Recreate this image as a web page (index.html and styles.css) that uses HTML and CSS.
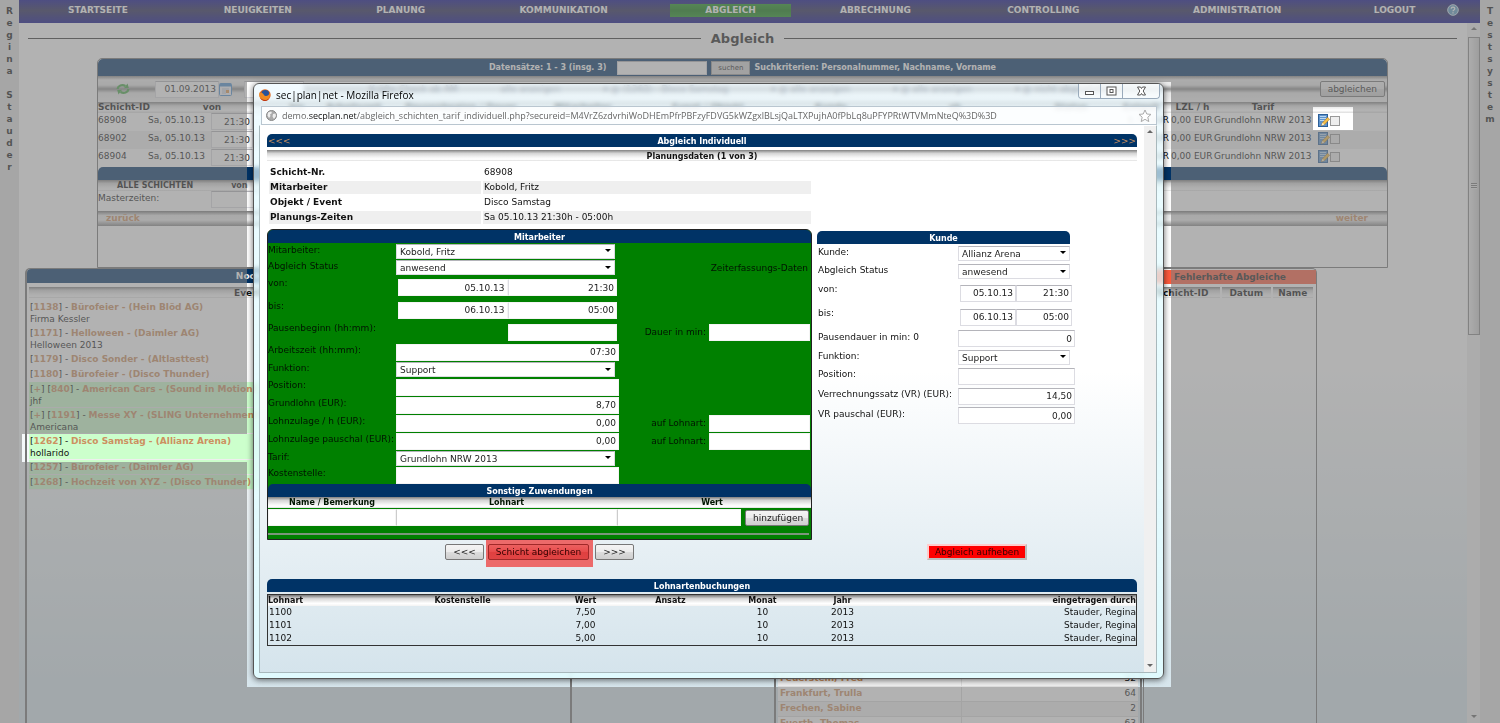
FILE: index.html
```html
<!DOCTYPE html>
<html lang="de">
<head>
<meta charset="utf-8">
<title>sec|plan|net - Abgleich</title>
<link rel="stylesheet" href="styles.css">
</head>
<body>
<svg class="defs" aria-hidden="true">
  <symbol id="edit" viewBox="0 0 12 13">
    <rect x="0.5" y="0.5" width="9" height="12" fill="#5e93cc" stroke="#2c5f98"/>
    <path d="M2 2.5h6M2 4.5h6M2 6.5h5" stroke="#b9d6f0"/>
    <path d="M3.5 11.5 4.5 8.8 9.6 3.4 11.6 5.2 6.4 10.5z" fill="#f5c04a" stroke="#b97a1c" stroke-width=".6"/>
    <path d="M3.5 11.5 4.5 8.8 6.4 10.5z" fill="#fff3d0"/>
  </symbol>
</svg>
<div class="app">
  <aside class="rail">R
e
g
i
n
a

S
t
a
u
d
e
r</aside>
  <div class="center">
    <nav class="nav">
      <a href="#">STARTSEITE</a><a href="#">NEUIGKEITEN</a><a href="#">PLANUNG</a><a href="#">KOMMUNIKATION</a><a href="#" class="active">ABGLEICH</a><a href="#">ABRECHNUNG</a><a href="#">CONTROLLING</a><a href="#">ADMINISTRATION</a><a href="#">LOGOUT</a>
      <a href="#" class="help" aria-label="Hilfe"><svg width="12" height="12" viewBox="0 0 12 12"><circle cx="6" cy="6" r="5.3" fill="#5b9bc4" stroke="#cfe4f2"/><path d="M4.2 4.8c0-2.4 3.6-2.2 3.6-.2 0 1.3-1.8 1.3-1.8 2.6M6 8.2v1.2" fill="none" stroke="#fff" stroke-width="1.2"/></svg></a>
    </nav>
    <div class="view">
      <main class="content">
        <div class="title"><h1>Abgleich</h1></div>
        <section class="panel shifts">
          <form class="bar search">
            <label for="q">Datensätze: 1 - 3 (insg. 3)</label>
            <input id="q" type="text"><button type="button">suchen</button>
            <span>Suchkriterien: Personalnummer, Nachname, Vorname</span>
          </form>
          <div class="filters">
            <svg class="refresh" width="14" height="12" viewBox="0 0 14 12"><path d="M1.5 6C2 2.5 6 1 9.5 3M12.500 6C12 9.500 8 11 4.500 9" fill="none" stroke="#46a846" stroke-width="2.200"/><path d="M8 5.300 12.800 5 11.500.4zM6 6.700 1.200 7 2.500 11.600z" fill="#46a846"/></svg>
            <input class="date" type="text" value="01.09.2013" aria-label="Datum ab">
            <svg class="cal" width="13" height="13" viewBox="0 0 13 13"><rect x=".5" y=".5" width="12" height="12" rx="1" fill="#f4f6fa" stroke="#4d8fd0"/><path d="M1 2h11" stroke="#4d8fd0" stroke-width="3"/><path d="M3 6h7M3 8h7M3 10h4" stroke="#b8c4d4"/><rect x="7" y="7" width="3" height="3" fill="#e09a50"/></svg>
            <input class="date two" type="text" aria-label="Datum bis">
            <div class="choices"><span>Kräfte Check ab AM</span><span>alle anzeigen</span><span>▾ @ (1262) - Disco Samstag</span><span>▾ @ alle anzeigen</span><span>▾ @ alle anzeigen</span><span>▾ @ nicht abgeglichen</span></div>
            <button type="button" class="btn">abgleichen</button>
          </div>
          <table class="grid">
            <colgroup><col class="c50"><col class="c60"><col class="c68"><col class="c42"><col class="c72"><col class="c142"><col class="c102"><col class="c148"><col class="c98"><col class="c150"><col class="c82"><col class="c59"><col class="c43"><col class="c98"><col></colgroup>
            <thead><tr><th class="l">Schicht-ID</th><th colspan="2">von</th><th>bis</th><th>Arbeitszeit</th><th>Pausenbeginn / Dauer</th><th>Mitarbeiter</th><th>Event / Objekt</th><th>Kunde</th><th>ab</th><th>Status</th><th>Entgelt</th><th>LZL / h</th><th>Tarif</th><th></th></tr></thead>
            <tbody>
              <tr><td>68908</td><td>Sa, 05.10.13</td><td><input type="text" value="21:30" aria-label="von 68908"></td><td colspan="8"></td><td class="r">8,70 EUR</td><td>0,00 EUR</td><td>Grundlohn NRW 2013</td><td class="act"><svg width="12" height="13"><use href="#edit"/></svg><input type="checkbox" aria-label="68908"></td></tr>
              <tr><td>68902</td><td>Sa, 05.10.13</td><td><input type="text" value="21:30" aria-label="von 68902"></td><td colspan="8"></td><td class="r">8,70 EUR</td><td>0,00 EUR</td><td>Grundlohn NRW 2013</td><td class="act"><svg width="12" height="13"><use href="#edit"/></svg><input type="checkbox" aria-label="68902"></td></tr>
              <tr><td>68904</td><td>Sa, 05.10.13</td><td><input type="text" value="21:30" aria-label="von 68904"></td><td colspan="8"></td><td class="r">8,70 EUR</td><td>0,00 EUR</td><td>Grundlohn NRW 2013</td><td class="act"><svg width="12" height="13"><use href="#edit"/></svg><input type="checkbox" aria-label="68904"></td></tr>
            </tbody>
          </table>
          <div class="bar thin"></div>
          <div class="metal all"><b>ALLE SCHICHTEN</b><b>von</b></div>
          <div class="master"><label for="mz">Masterzeiten:</label><input id="mz" type="text"></div>
          <div class="pager"><a href="#">zurück</a><a href="#">weiter</a></div>
        </section>
        <div class="lower">
          <section class="panel events">
            <h2 class="bar">Noch nicht abgeglichene</h2>
            <div class="metal">Event / Objekt - (Kunden)</div>
            <ul>
              <li>[<a href="#">1138</a>] - <a href="#">Bürofeier - (Hein Blöd AG)</a><br>Firma Kessler</li>
              <li>[<a href="#">1171</a>] - <a href="#">Helloween - (Daimler AG)</a><br>Helloween 2013</li>
              <li>[<a href="#">1179</a>] - <a href="#">Disco Sonder - (Altlasttest)</a></li>
              <li>[<a href="#">1180</a>] - <a href="#">Bürofeier - (Disco Thunder)</a></li>
              <li class="ok">[<a href="#">+</a>] [<a href="#">840</a>] - <a href="#">American Cars - (Sound in Motion)</a><br>jhf</li>
              <li class="ok">[<a href="#">+</a>] [<a href="#">1191</a>] - <a href="#">Messe XY - (SLING Unternehmen)</a><br>Americana</li>
              <li class="ok">[<a href="#">1262</a>] - <a href="#">Disco Samstag - (Allianz Arena)</a><br>hollarido</li>
              <li class="ok">[<a href="#">1257</a>] - <a href="#">Bürofeier - (Daimler AG)</a></li>
              <li class="ok">[<a href="#">1268</a>] - <a href="#">Hochzeit von XYZ - (Disco Thunder)</a></li>
            </ul>
          </section>
          <section class="panel staff">
            <table>
              <tr><td><a href="#">Feuerstein, Fred</a></td><td>32</td></tr>
              <tr><td><a href="#">Frankfurt, Trulla</a></td><td>64</td></tr>
              <tr><td><a href="#">Frechen, Sabine</a></td><td>2</td></tr>
              <tr><td><a href="#">Fuerth, Thomas</a></td><td>63</td></tr>
            </table>
          </section>
          <section class="panel faults">
            <h2 class="bar red">Fehlerhafte Abgleiche</h2>
            <div class="heads"><b class="metal">Schicht-ID</b><b class="metal">Datum</b><b class="metal">Name</b></div>
          </section>
        </div>
      </main>
      <div class="scroll"><i class="up"></i><div class="thumb"><i></i></div><i class="down"></i></div>
    </div>
  </div>
  <aside class="rail right">T
e
s
t
s
y
s
t
e
m</aside>
</div>

<div class="window" role="dialog" aria-label="Abgleich Individuell">
  <header class="titlebar">
    <svg width="12" height="12" viewBox="0 0 12 12"><circle cx="6" cy="6" r="5.700" fill="#e0661c"/><circle cx="6.300" cy="5" r="3.900" fill="#27539a"/><path d="M.5 3.500C1.500 4 2 3.500 3.500 4.200 5 5 4.500 6.500 6.500 7c2 .3 3.500-1 4-3 1 3.500-.8 7.500-4.500 7.700C2 11.700-.5 8 .5 3.500z" fill="#ef8a22"/><path d="M1 8.500c2 3 7 3.500 9.500.5-1.500 4-8 4-9.500-.5z" fill="#b92f12"/></svg>
    <span>sec|plan|net - Mozilla Firefox</span>
    <div class="wbtns">
      <button type="button" aria-label="Minimieren"><svg width="11" height="10" viewBox="0 0 11 10"><rect x="1.500" y="5.500" width="8" height="3" fill="#fff" stroke="#555"/></svg></button>
      <button type="button" aria-label="Maximieren"><svg width="11" height="10" viewBox="0 0 11 10"><rect x="1" y="1" width="9" height="8" fill="#fff" stroke="#555"/><rect x="4" y="3.500" width="3" height="3" fill="#fff" stroke="#555"/></svg></button>
      <button type="button" class="wide" aria-label="Schließen"><svg width="11" height="10" viewBox="0 0 11 10"><path d="M1.500 1h3l1 1.500 1-1.500h3L7.200 5l2.300 4h-3l-1-1.500L4.500 9h-3l2.300-4z" fill="#fff" stroke="#555"/></svg></button>
    </div>
  </header>
  <div class="url">
    <svg width="11" height="11" viewBox="0 0 11 11"><circle cx="5.500" cy="5.500" r="5" fill="#aaa" stroke="#888"/><path d="M2 2.500 5 1.500 6 3 4 4.500 4.500 6 3 8 1.500 5.500zM7 4l2.500-.5.500 2.500L8 9 6.500 6.500z" fill="#eee"/></svg>
    <span>demo.<b>secplan.net</b>/abgleich_schichten_tarif_individuell.php?secureid=M4VrZ6zdvrhiWoDHEmPfrPBFzyFDVG5kWZgxlBLsjQaLTXPujhA0fPbLq8uPFYPRtWTVMmNteQ%3D%3D</span>
    <svg class="star" width="14" height="14" viewBox="0 0 14 14"><path d="M7 1 8.800 5 13 5.400 9.800 8.200 10.800 12.600 7 10.300 3.200 12.600 4.200 8.200 1 5.400 5.200 5z" fill="#fff" stroke="#aaa"/></svg>
  </div>
  <div class="frame">
    <div class="page">
      <div class="bar head"><a href="#">&lt;&lt;&lt;</a><h2>Abgleich Individuell</h2><a href="#">&gt;&gt;&gt;</a></div>
      <div class="metal sub">Planungsdaten (1 von 3)</div>
      <table class="info">
        <tr><th>Schicht-Nr.</th><td>68908</td></tr>
        <tr><th>Mitarbeiter</th><td>Kobold, Fritz</td></tr>
        <tr><th>Objekt / Event</th><td>Disco Samstag</td></tr>
        <tr><th>Planungs-Zeiten</th><td>Sa 05.10.13 21:30h - 05:00h</td></tr>
      </table>
      <div class="forms">
        <form class="worker">
          <h3 class="bar">Mitarbeiter</h3>
          <div class="row r16"><label for="m1">Mitarbeiter:</label><select id="m1"><option>Kobold, Fritz</option></select></div>
          <div class="row"><label for="m2">Abgleich Status</label><select id="m2"><option>anwesend</option></select><span class="zd">Zeiterfassungs-Daten</span></div>
          <div class="row r23"><label for="m3">von:</label><div class="pair"><input id="m3" type="text" value="05.10.13"><input type="text" value="21:30" aria-label="von Uhrzeit"></div></div>
          <div class="row r22"><label for="m4">bis:</label><div class="pair"><input id="m4" type="text" value="06.10.13"><input type="text" value="05:00" aria-label="bis Uhrzeit"></div></div>
          <div class="row r22"><label for="m5">Pausenbeginn (hh:mm):</label><div class="pair"><span></span><input id="m5" type="text"></div><label class="side" for="m5b">Dauer in min:</label><input id="m5b" type="text"></div>
          <div class="row r18"><label for="m6">Arbeitszeit (hh:mm):</label><input id="m6" type="text" value="07:30"></div>
          <div class="row"><label for="m7">Funktion:</label><select id="m7"><option>Support</option></select></div>
          <div class="row r18"><label for="m8">Position:</label><input id="m8" type="text"></div>
          <div class="row r18"><label for="m9">Grundlohn (EUR):</label><input id="m9" type="text" value="8,70"></div>
          <div class="row r18"><label for="m10">Lohnzulage / h (EUR):</label><input id="m10" type="text" value="0,00"><label class="side" for="m10b">auf Lohnart:</label><input id="m10b" type="text"></div>
          <div class="row r18"><label for="m11">Lohnzulage pauschal (EUR):</label><input id="m11" type="text" value="0,00"><label class="side" for="m11b">auf Lohnart:</label><input id="m11b" type="text"></div>
          <div class="row r16"><label for="m12">Tarif:</label><select id="m12"><option>Grundlohn NRW 2013</option></select></div>
          <div class="row r18"><label for="m13">Kostenstelle:</label><input id="m13" type="text"></div>
          <h3 class="bar">Sonstige Zuwendungen</h3>
          <div class="extra metal"><label for="x1">Name / Bemerkung</label><label for="x2">Lohnart</label><label for="x3">Wert</label></div>
          <div class="extra fields"><input id="x1" type="text"><input id="x2" type="text"><input id="x3" type="text"><button type="button" class="btn">hinzufügen</button></div>
          <hr>
        </form>
        <form class="client">
          <h3 class="bar">Kunde</h3>
          <div class="row r18"><label for="k1">Kunde:</label><select id="k1"><option>Allianz Arena</option></select></div>
          <div class="row r19"><label for="k2">Abgleich Status</label><select id="k2"><option>anwesend</option></select></div>
          <div class="row r24"><label for="k3">von:</label><div class="pair"><input id="k3" type="text" value="05.10.13"><input type="text" value="21:30" aria-label="von Uhrzeit"></div></div>
          <div class="row r24"><label for="k4">bis:</label><div class="pair"><input id="k4" type="text" value="06.10.13"><input type="text" value="05:00" aria-label="bis Uhrzeit"></div></div>
          <div class="row r19"><label for="k5">Pausendauer in min: 0</label><input id="k5" type="text" value="0"></div>
          <div class="row r18"><label for="k6">Funktion:</label><select id="k6"><option>Support</option></select></div>
          <div class="row r20"><label for="k7">Position:</label><input id="k7" type="text"></div>
          <div class="row r20"><label for="k8">Verrechnungssatz (VR) (EUR):</label><input id="k8" type="text" value="14,50"></div>
          <div class="row r19"><label for="k9">VR pauschal (EUR):</label><input id="k9" type="text" value="0,00"></div>
        </form>
      </div>
      <div class="actions">
        <div><button type="button" class="btn nav3">&lt;&lt;&lt;</button><span class="mark"><button type="button" class="btn">Schicht abgleichen</button></span><button type="button" class="btn nav3">&gt;&gt;&gt;</button></div>
        <div><button type="button" class="cancel">Abgleich aufheben</button></div>
      </div>
      <h3 class="bar book">Lohnartenbuchungen</h3>
      <table class="bookings">
        <colgroup><col class="c120"><col class="c150"><col class="c96"><col class="c74"><col class="c110"><col class="c50"><col></colgroup>
        <thead><tr><th>Lohnart</th><th>Kostenstelle</th><th>Wert</th><th>Ansatz</th><th>Monat</th><th>Jahr</th><th>eingetragen durch</th></tr></thead>
        <tbody>
          <tr><td>1100</td><td></td><td>7,50</td><td></td><td>10</td><td>2013</td><td>Stauder, Regina</td></tr>
          <tr><td>1101</td><td></td><td>7,00</td><td></td><td>10</td><td>2013</td><td>Stauder, Regina</td></tr>
          <tr><td>1102</td><td></td><td>5,00</td><td></td><td>10</td><td>2013</td><td>Stauder, Regina</td></tr>
        </tbody>
      </table>
    </div>
    <div class="scroll inner"><i class="up"></i><i class="down"></i></div>
  </div>
</div>
<div class="dim"></div>
</body>
</html>
```
FILE: styles.css
```css
* { box-sizing: border-box; }
body {
  margin: 0;
  height: 100vh;
  overflow: hidden;
  color: #111;
  font: 9px/14px "DejaVu Sans", Verdana, sans-serif;
}
h1, h2, h3, ul { margin: 0; padding: 0; font-size: inherit; }
ul { list-style: none; }
a { color: #cc9060; font-weight: bold; text-decoration: none; }
input, select, button { margin: 0; font: inherit; color: #222; border-radius: 0; min-width: 0; }
table { border-collapse: collapse; border-spacing: 0; }
th, td { padding: 0; }
svg { flex: none; }
.defs { position: absolute; width: 0; height: 0; }

input[type="text"] {
  height: 17px;
  padding: 0 2px;
  background: #fff;
  border: 1px solid #dcdce2;
  border-top-color: #b4b4ba;
  text-align: right;
}
select {
  height: 15px;
  padding: 0 3px;
  border: 1px solid #dcdce2;
  border-top-color: #b4b4ba;
  appearance: none;
  background: #fff url("data:image/svg+xml,%3Csvg xmlns='http://www.w3.org/2000/svg' width='6' height='4'%3E%3Cpath d='M0 0h6L3 3z'/%3E%3C/svg%3E") no-repeat right 3px center;
}
.btn {
  height: 16px;
  padding: 0 7px;
  line-height: 12px;
  background: linear-gradient(#f4f4f4, #ececec 48%, #dcdcdc 52%, #cfcfcf);
  border: 1px solid #777;
  border-radius: 2px;
}
.bar {
  background: #036;
  color: #fff;
  font-size: 8px;
  font-weight: bold;
  line-height: 15px;
  height: 13px;
  text-align: center;
  border-radius: 5px 5px 0 0;
}
.metal {
  height: 11px;
  line-height: 12px;
  text-align: center;
  font-weight: bold;
  background: linear-gradient(#808080, #d4d4d4 30%, #f4f4f4 65%, #fff 85%, #ddd);
}

/* application shell */
.app { display: flex; height: 100vh; background: linear-gradient(#fff 50%, #d7e6ed 95%); }
.rail {
  width: 19px;
  flex: none;
  padding-top: 5px;
  white-space: pre-line;
  text-align: center;
  font-weight: bold;
  line-height: 12px;
  background: #e2e2e2;
}
.rail.right { width: 20px; }
.center { flex: 1; min-width: 0; display: flex; flex-direction: column; }
.nav {
  display: grid;
  grid-template-columns: 158fr 162fr 124fr 202fr 132fr 158fr 178fr 210fr 105fr 33fr;
  align-items: center;
  height: 23px;
  padding-bottom: 3px;
  background: linear-gradient(#060688, #202050 45%, #060688);
}
.nav a { margin: 0 5px; line-height: 13px; text-align: center; color: #fff; }
.nav .active { background: linear-gradient(#189018, #0a780a 50%, #189018); }
.nav .help { margin: 0; height: 12px; text-align: left; }
.view { flex: 1; display: flex; min-height: 0; }
.content { flex: 1; min-width: 0; display: flex; flex-direction: column; overflow: hidden; }
.title { display: flex; align-items: center; gap: 10px; height: 27px; margin: 2px 10px 6px 9px; }
.title::before, .title::after { content: ""; flex: 1; height: 1px; background: #333; }
.title h1 { font-size: 13px; color: #222; line-height: 27px; }
.panel { border: 1px solid #777; border-bottom: 0; border-radius: 5px 5px 0 0; }

/* shift list */
.shifts { margin: 0 79px 0 78px; height: 210px; border-bottom: 1px solid #777; }
.search { display: flex; justify-content: center; align-items: center; height: 17px; }
.search input { width: 90px; height: 14px; margin-left: 11px; }
.search button { width: 39px; height: 14px; margin: 0 4px; padding: 0; font-size: 7px; line-height: 10px; font-weight: normal; background: #d8d8d8; border: 1px solid #999; }
.filters {
  display: flex;
  align-items: center;
  height: 26px;
  padding: 0 2px 0 18px;
  background: linear-gradient(#8a8a8a, #f0f0f0 15%, #e8e8e8 35%, #909090 50%, #e8e8e8 65%, #f4f4f4);
}
.refresh { margin-right: 25px; }
.date { width: 64px; border: 0; }
.cal { margin-right: 12px; }
.date.two { width: 60px; }
.choices { flex: 1; min-width: 0; display: flex; justify-content: space-between; padding: 0 205px 0 65px; white-space: nowrap; overflow: hidden; color: #223; }
.grid { width: 100%; table-layout: fixed; white-space: nowrap; }
.grid thead { background: linear-gradient(#858585, #e2e2e2 35%, #fff 75%, #ddd); }
.grid th { height: 11px; line-height: 11px; overflow: hidden; }
.grid th.l { overflow: visible; }
.grid td { height: 18px; line-height: 14px; vertical-align: top; }
.grid tbody tr:nth-child(even) { background: #f0f0f0; }
.grid td input[type="text"] { width: 42px; margin-left: 3px; }
.grid .r { text-align: right; padding-right: 2px; }
.act { padding-left: 6px; }
.act svg, .act input { vertical-align: top; margin-top: 1px; }
.act input { width: 10px; height: 10px; margin-top: 3px; appearance: none; background: #eee; border: 1px solid #999; }
.c42 { width: 42px; } .c43 { width: 43px; } .c50 { width: 50px; } .c59 { width: 59px; }
.c60 { width: 60px; } .c68 { width: 68px; } .c72 { width: 72px; } .c74 { width: 74px; }
.c82 { width: 82px; } .c96 { width: 96px; } .c98 { width: 98px; } .c102 { width: 102px; }
.c110 { width: 110px; } .c120 { width: 120px; } .c142 { width: 142px; } .c148 { width: 148px; } .c150 { width: 150px; }
.all { display: flex; gap: 38px; padding-left: 19px; font-size: 8px; }
.master { display: flex; height: 20px; }
.master label { width: 113px; }
.master input { width: 60px; }
.pager {
  display: flex;
  justify-content: space-between;
  height: 15px;
  padding: 0 19px 0 8px;
  background: linear-gradient(#777, #e8e8e8 30%, #eee 60%, #888);
}

/* lower panels */
.lower { flex: 1; display: flex; min-height: 0; padding: 0 150px 0 6px; }
.lower .bar { border-radius: 4px 4px 0 0; height: 14px; font-size: 9px; }
.events { width: 547px; border-width: 1px 2px 0; }
.events .metal { margin: 4px 2px 2px; }
.events li { min-height: 15px; margin: 0 2px; padding: 1px; line-height: 12px; }
.events .ok { background: #cfc; border-bottom: 1px solid #eee; padding-bottom: 0; }
.staff { width: 368px; margin-left: auto; padding: 402px 2px 0; border-width: 1px 2px 0; }
.staff table { width: 100%; }
.staff tr { background: #fff; border-bottom: 1px solid #ddd; }
.staff tr:nth-child(odd) { background: #f0f0f0; }
.staff td { height: 15px; padding: 0 2px; line-height: 13px; }
.staff td:last-child { width: 177px; text-align: right; border-left: 1px solid #ddd; }
.faults { width: 174px; margin-left: 1px; padding-top: 1px; }
.lower .red { background: #ff5a3c; color: #222; border-radius: 0; }
.heads { display: grid; grid-template-columns: 74fr 48fr 40fr; gap: 2px; padding: 3px 3px 0 1px; }

.scroll { width: 13px; display: flex; flex-direction: column; align-items: center; background: #f0f0f0; }
.scroll .up, .scroll .down { border: 3px solid transparent; }
.scroll .up { margin: 1px 0 7px; border-bottom-color: #666; }
.scroll .down { margin: auto 0 2px; border-top-color: #666; }
.thumb { width: 12px; height: 298px; display: grid; place-items: center; background: linear-gradient(90deg, #f2f2f2, #ccc); border: 1px solid #888; }
.thumb i { width: 6px; height: 6px; background: repeating-linear-gradient(#777 0 1px, #eee 1px 2px); }

/* popup window */
.window {
  position: absolute;
  left: 253px;
  right: 336px;
  top: 83px;
  padding: 0 3px 5px 5px;
  background: linear-gradient(rgba(235, 248, 255, .65), rgba(225, 250, 255, .7) 100px, rgba(225, 252, 255, .9));
  backdrop-filter: blur(2px);
  border: 1px solid #555;
  border-radius: 6px;
  box-shadow: 0 1px 6px rgba(0, 0, 0, .6);
}
.titlebar { display: flex; align-items: center; gap: 5px; height: 22px; font: 10px/14px "Open Sans", sans-serif; color: #000; }
.wbtns { display: flex; align-self: flex-start; margin-left: auto; border: 1px solid #9ab; border-top: 0; border-radius: 0 0 4px 4px; overflow: hidden; }
.wbtns button { display: grid; place-items: center; width: 22px; height: 14px; padding: 0; background: rgba(255, 255, 255, .6); border: 0; border-right: 1px solid #9ab; }
.wbtns .wide { width: 36px; border-right: 0; }
.url { display: flex; align-items: center; gap: 5px; height: 19px; margin: 0 3px 0 2px; padding: 0 4px; background: rgba(255, 255, 255, .8); border: 1px solid #b9c6d0; font: 9px/14px "Open Sans", sans-serif; color: #666; white-space: nowrap; }
.url b { color: #111; font-weight: normal; }
.star { margin-left: auto; }
.frame { display: flex; margin-right: 3px; border: 1px solid #a8b8bc; border-top-color: #fff; background: linear-gradient(#fff 45%, #d5e4ec); }
.page { flex: 1; min-width: 0; padding: 8px 7px 26px; }
.inner { width: 12px; }
.head { display: flex; justify-content: space-between; padding: 0 1px; }
.head a { font-size: 9px; font-weight: normal; }
.sub { margin: 3px 0; font-size: 8px; line-height: 13px; }
.info { border-collapse: separate; border-spacing: 2px; width: 546px; max-width: 100%; }
.info th, .info td { height: 13px; line-height: 13px; text-align: left; padding-left: 1px; }
.info th { width: 212px; }
.info tr:nth-child(even) > * { background: #efefef; }
.forms { display: flex; align-items: flex-start; gap: 5px; margin-top: 3px; }
.worker { flex: 0 0 545px; background: #008000; border: 1px solid #222; border-radius: 6px 6px 0 0; color: #001400; }
.worker .row { display: grid; grid-template-columns: 128px 223px 87px 1fr; height: 17px; align-items: center; padding-right: 1px; }
.row label { align-self: start; white-space: nowrap; }
.row .side { align-self: center; text-align: right; }
.side + input { margin-left: 3px; }
.worker select { width: 219px; }
.worker .zd { grid-column: 3 / 5; text-align: right; padding-right: 2px; }
.pair { display: grid; grid-template-columns: 1fr 1fr; padding: 0 2px; }
.worker input[type="text"] { border-color: #f4f4f4; }
.worker .pair input + input { border-left-color: #dcdce2; }
.forms .r16 { height: 16px; } .forms .r18 { height: 18px; } .forms .r19 { height: 19px; }
.forms .r20 { height: 20px; } .forms .r22 { height: 22px; } .forms .r23 { height: 23px; } .forms .r24 { height: 24px; }
.extra { display: grid; grid-template-columns: 128px 221px 124px 1fr; }
.extra.metal { font-size: 8px; }
.extra.metal label:last-child { padding-left: 66px; }
.extra.fields { padding: 1px 2px 0 0; align-items: center; }
.extra.fields .btn { margin-left: 4px; }
.worker .extra input + input { border-left-color: #ccc; }
.worker hr { height: 2px; margin: 7px 2px 4px 0; border: 0; background: #7c957c; }
.client { width: 257px; margin-top: 2px; }
.client .bar { width: 253px; }
.client .row { display: grid; grid-template-columns: 140px 117px; align-items: center; padding-left: 1px; }
.client .row label { line-height: 16px; }
.client select { width: 112px; }
.client .pair { padding: 0 3px 0 2px; }
.actions { display: flex; gap: 5px; height: 39px; }
.actions > div:first-child { flex: 0 0 545px; display: flex; justify-content: center; align-items: flex-start; gap: 2px; }
.actions > div:last-child { flex: 1; text-align: center; }
.actions .nav3 { margin-top: 4px; }
.mark { padding: 4px 4px 7px 2px; background: #ec6a6a; }
.mark .btn { display: block; background: linear-gradient(#ec6060, #e84c4c 48%, #e04040 52%, #e04444); border-color: #a02828; color: #300; }
.cancel { height: 16px; margin-top: 4px; padding: 0 6px; line-height: 12px; background: #f00; border: 2px solid; border-color: #fcc #bbb #bbb #fcc; color: #300; }
.book { margin-bottom: 2px; }
.bookings { width: 100%; table-layout: fixed; border: 1px solid #333; }
.bookings thead { background: linear-gradient(#777, #d8d8d8 30%, #fff 70%, #eee); }
.bookings th { height: 11px; font-size: 8px; line-height: 11px; }
.bookings td { height: 13px; line-height: 13px; text-align: center; }
.bookings tr > :first-child { text-align: left; }
.bookings td:first-child { padding-left: 1px; }
.bookings tr > :last-child { text-align: right; }

/* grey veil with clear openings for the window, the event row and the edit icon */
.dim {
  position: absolute;
  inset: 0;
  pointer-events: none;
  background: rgba(127, 127, 127, .6);
  clip-path: polygon(evenodd,
    0 0, 100% 0, 100% 100%, 0 100%, 0 0,
    247px 82px, calc(100% - 329px) 82px, calc(100% - 329px) 687px, 247px 687px, 247px 82px, 0 0,
    22px 434px, 247px 434px, 247px 462px, 22px 462px, 22px 434px, 0 0,
    calc(100% - 187px) 107px, calc(100% - 147px) 107px, calc(100% - 147px) 130px, calc(100% - 187px) 130px, calc(100% - 187px) 107px, 0 0);
}
```
